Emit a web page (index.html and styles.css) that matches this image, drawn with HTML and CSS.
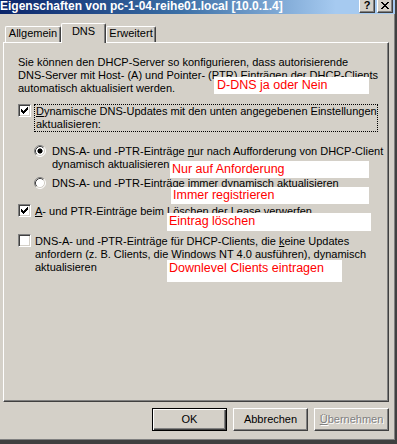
FILE: index.html
```html
<!DOCTYPE html>
<html lang="de">
<head>
<meta charset="utf-8">
<title>Eigenschaften</title>
<link rel="stylesheet" href="styles.css">
</head>
<body>
<div class="window">
  <div class="titlebar">
    <span class="title">Eigenschaften von pc-1-04.reihe01.local [10.0.1.4]</span>
    <div class="tb-buttons">
      <span class="tb-btn tb-help">?</span>
      <span class="tb-btn">
        <svg width="8" height="7" viewBox="0 0 8 7" shape-rendering="crispEdges"><path d="M0 0h2v1h-2zM6 0h2v1h-2zM1 1h2v1h-2zM5 1h2v1h-2zM2 2h4v1h-4zM3 3h2v1h-2zM2 4h4v1h-4zM1 5h2v1h-2zM5 5h2v1h-2zM0 6h2v1h-2zM6 6h2v1h-2z" fill="#000"/></svg>
      </span>
    </div>
  </div>

  <div class="client">
    <div class="tabs">
      <div class="tab tab-a">Allgemein</div>
      <div class="tab tab-sel">DNS</div>
      <div class="tab tab-b">Erweitert</div>
    </div>

    <div class="panel">
      <p class="intro">Sie können den DHCP-Server so konfigurieren, dass autorisierende<br>DNS-Server mit Host- (A) und Pointer- (PTR) Einträgen der DHCP-Clients<br>automatisch aktualisiert werden.</p>

      <div class="row row-1">
        <span class="check">
          <svg width="13" height="13" viewBox="0 0 13 13" shape-rendering="crispEdges"><path d="M9 3h1v1h-1zM8 4h2v1h-2zM3 5h1v1h-1zM7 5h3v1h-3zM3 6h2v1h-2zM6 6h3v1h-3zM3 7h5v1h-5zM4 8h3v1h-3zM5 9h1v1h-1z" fill="#000"/></svg>
        </span>
        <span class="label focus"><u>D</u>ynamische DNS-Updates mit den unten angegebenen Einstellungen<br>aktualisieren:</span>
      </div>

      <div class="radios">
        <div class="row row-r1">
          <span class="radio">
            <svg width="12" height="12" viewBox="0 0 12 12"><circle cx="6" cy="6" r="5" fill="#fff"/><path d="M2.11 9.89A5.5 5.5 0 0 1 9.89 2.11" fill="none" stroke="#808080"/><path d="M2.82 9.18A4.5 4.5 0 0 1 9.18 2.82" fill="none" stroke="#404040"/><path d="M9.89 2.11A5.5 5.5 0 0 1 2.11 9.89" fill="none" stroke="#fff"/><path d="M9.18 2.82A4.5 4.5 0 0 1 2.82 9.18" fill="none" stroke="#d4d0c8"/><rect x="4" y="4" width="4" height="4" fill="#000"/><rect x="5" y="3.5" width="2" height="5" fill="#000"/><rect x="3.5" y="5" width="5" height="2" fill="#000"/></svg>
          </span>
          <span class="label-r">DNS-A- und -PTR-Einträge <u>n</u>ur nach Aufforderung von DHCP-Client<br>dynamisch aktualisieren</span>
        </div>
        <div class="row row-r2">
          <span class="radio">
            <svg width="12" height="12" viewBox="0 0 12 12"><circle cx="6" cy="6" r="5" fill="#fff"/><path d="M2.11 9.89A5.5 5.5 0 0 1 9.89 2.11" fill="none" stroke="#808080"/><path d="M2.82 9.18A4.5 4.5 0 0 1 9.18 2.82" fill="none" stroke="#404040"/><path d="M9.89 2.11A5.5 5.5 0 0 1 2.11 9.89" fill="none" stroke="#fff"/><path d="M9.18 2.82A4.5 4.5 0 0 1 2.82 9.18" fill="none" stroke="#d4d0c8"/></svg>
          </span>
          <span class="label-r">DNS-A- und -PTR-Einträge immer dynamisch aktualisieren</span>
        </div>
      </div>

      <div class="row row-2">
        <span class="check">
          <svg width="13" height="13" viewBox="0 0 13 13" shape-rendering="crispEdges"><path d="M9 3h1v1h-1zM8 4h2v1h-2zM3 5h1v1h-1zM7 5h3v1h-3zM3 6h2v1h-2zM6 6h3v1h-3zM3 7h5v1h-5zM4 8h3v1h-3zM5 9h1v1h-1z" fill="#000"/></svg>
        </span>
        <span class="label"><u>A</u>- und PTR-Einträge beim Löschen der Lease verwerfen</span>
      </div>

      <div class="row row-3">
        <span class="check"></span>
        <span class="label">DNS-A- und -PTR-Einträge für DHCP-Clients, die <u>k</u>eine Updates<br>anfordern (z. B. Clients, die Windows NT 4.0 ausführen), dynamisch<br>aktualisieren</span>
      </div>
    </div>

    <div class="buttons">
      <button class="btn btn-default">OK</button>
      <button class="btn">Abbrechen</button>
      <button class="btn btn-disabled"><u>Ü</u>bernehmen</button>
    </div>
  </div>

  <div class="note note-1">D-DNS ja oder Nein</div>
  <div class="note note-2">Nur auf Anforderung</div>
  <div class="note note-3">Immer registrieren</div>
  <div class="note note-4">Eintrag löschen</div>
  <div class="note note-5">Downlevel Clients eintragen</div>
</div>
</body>
</html>
```

FILE: styles.css
```css
html, body {
  margin: 0;
  padding: 0;
}

body {
  background: #d4d0c8;
  font-family: "Liberation Sans", Arial, sans-serif;
  font-size: 11px;
  color: #000;
}

.window {
  position: relative;
  width: 397px;
  height: 444px;
  box-sizing: border-box;
  border-right: 2px solid #404040;
  border-bottom: 4px solid #404040;
  box-shadow: inset -1px -1px 0 #808080;
  overflow: hidden;
}

/* ---------- title bar ---------- */
.titlebar {
  display: flex;
  align-items: flex-start;
  justify-content: space-between;
  height: 14px;
  background: linear-gradient(to right, #0a246a 0%, #3a6ea5 45%, #a6caf0 85%, #a6caf0 100%);
}

.title {
  color: #fff;
  font-weight: bold;
  font-size: 12px;
  line-height: 13px;
  white-space: nowrap;
}

.tb-buttons {
  display: flex;
  gap: 2px;
  margin-right: 2px;
}

.tb-btn {
  display: flex;
  align-items: center;
  justify-content: center;
  width: 16px;
  height: 13px;
  box-sizing: border-box;
  background: #d4d0c8;
  border-left: 1px solid #fff;
  border-right: 1px solid #404040;
  border-bottom: 1px solid #404040;
  box-shadow: inset -1px -1px 0 #808080;
  padding-bottom: 2px;
}

.tb-help {
  font-weight: bold;
  font-size: 11px;
  line-height: 10px;
  padding-bottom: 3px;
}

/* ---------- client ---------- */
.client {
  padding-left: 3px;
}

.tabs {
  display: flex;
  align-items: flex-end;
  height: 20px;
  margin-top: 8px;
  padding-left: 2px;
  position: relative;
  z-index: 1;
}

.tab {
  box-sizing: border-box;
  height: 16px;
  border-top: 1px solid #fff;
  border-left: 1px solid #fff;
  border-right: 1px solid #404040;
  box-shadow: inset -1px 0 0 #808080;
  border-radius: 2px 2px 0 0;
  line-height: 13px;
  text-align: center;
  background: #d4d0c8;
}

.tab-a {
  width: 56px;
}

.tab-sel {
  width: 45px;
  height: 20px;
  margin-bottom: -1px;
  padding-top: 1px;
}

.tab-b {
  width: 50px;
}

.panel {
  box-sizing: border-box;
  width: 386px;
  height: 360px;
  border-top: 1px solid #fff;
  border-left: 1px solid #fff;
  border-right: 1px solid #404040;
  border-bottom: 1px solid #404040;
  box-shadow: inset -1px -1px 0 #808080;
  padding: 13px 18px 0 14px;
}

.intro {
  margin: 0;
  line-height: 13px;
  white-space: nowrap;
}

.row {
  display: flex;
  align-items: flex-start;
  line-height: 13px;
  white-space: nowrap;
}

.check {
  flex: none;
  width: 13px;
  height: 13px;
  box-sizing: border-box;
  background: #fff;
  border: 1px solid;
  border-color: #808080 #fff #fff #808080;
  box-shadow: inset 1px 1px 0 #404040, inset -1px -1px 0 #d4d0c8;
  position: relative;
}

.check svg {
  position: absolute;
  left: -1px;
  top: -1px;
}

.label {
  margin-left: 4px;
  padding-top: 1px;
}

.label.focus {
  flex: 1;
  margin-left: 3px;
  padding-top: 0;
  padding-left: 1px;
  border: 1px dotted #000;
}

.row-1 {
  margin-top: 9px;
}

.radios {
  margin-left: 16px;
  margin-top: 13px;
}

.radio {
  flex: none;
  width: 12px;
  height: 12px;
  display: block;
}

.radio svg {
  display: block;
}

.label-r {
  margin-left: 6px;
}

.row-r2 {
  margin-top: 6px;
}

.row-2 {
  margin-top: 14px;
}

.row-3 {
  margin-top: 16px;
}

/* ---------- buttons ---------- */
.buttons {
  display: flex;
  justify-content: flex-end;
  gap: 6px;
  width: 386px;
  margin-top: 6px;
}

.btn {
  width: 75px;
  height: 23px;
  box-sizing: border-box;
  padding: 0;
  margin: 0;
  font-family: "Liberation Sans", Arial, sans-serif;
  font-size: 11px;
  line-height: 21px;
  color: #000;
  background: #d4d0c8;
  border: 1px solid;
  border-color: #fff #404040 #404040 #fff;
  box-shadow: inset -1px -1px 0 #808080;
  border-radius: 0;
}

.btn-default {
  border: 1px solid #000;
  box-shadow: inset 1px 1px 0 #fff, inset -1px -1px 0 #404040, inset -2px -2px 0 #808080;
}

.btn-disabled {
  color: #808080;
  text-shadow: 1px 1px 0 #fff;
}

/* ---------- annotations ---------- */
.note {
  position: absolute;
  box-sizing: border-box;
  background: #fff;
  color: #f00;
  font-family: "Liberation Sans", Arial, sans-serif;
  font-size: 12.5px;
  line-height: 17px;
  height: 17px;
  padding-left: 2px;
  white-space: nowrap;
}

.note-1 {
  left: 214px;
  top: 77px;
  width: 155px;
  padding-left: 3px;
}

.note-2 {
  left: 170px;
  top: 161px;
  width: 199px;
}

.note-3 {
  left: 171px;
  top: 187px;
  width: 198px;
}

.note-4 {
  left: 167px;
  top: 213px;
  width: 204px;
  height: 18px;
}

.note-5 {
  left: 167px;
  top: 260px;
  width: 175px;
  height: 22px;
}
```
